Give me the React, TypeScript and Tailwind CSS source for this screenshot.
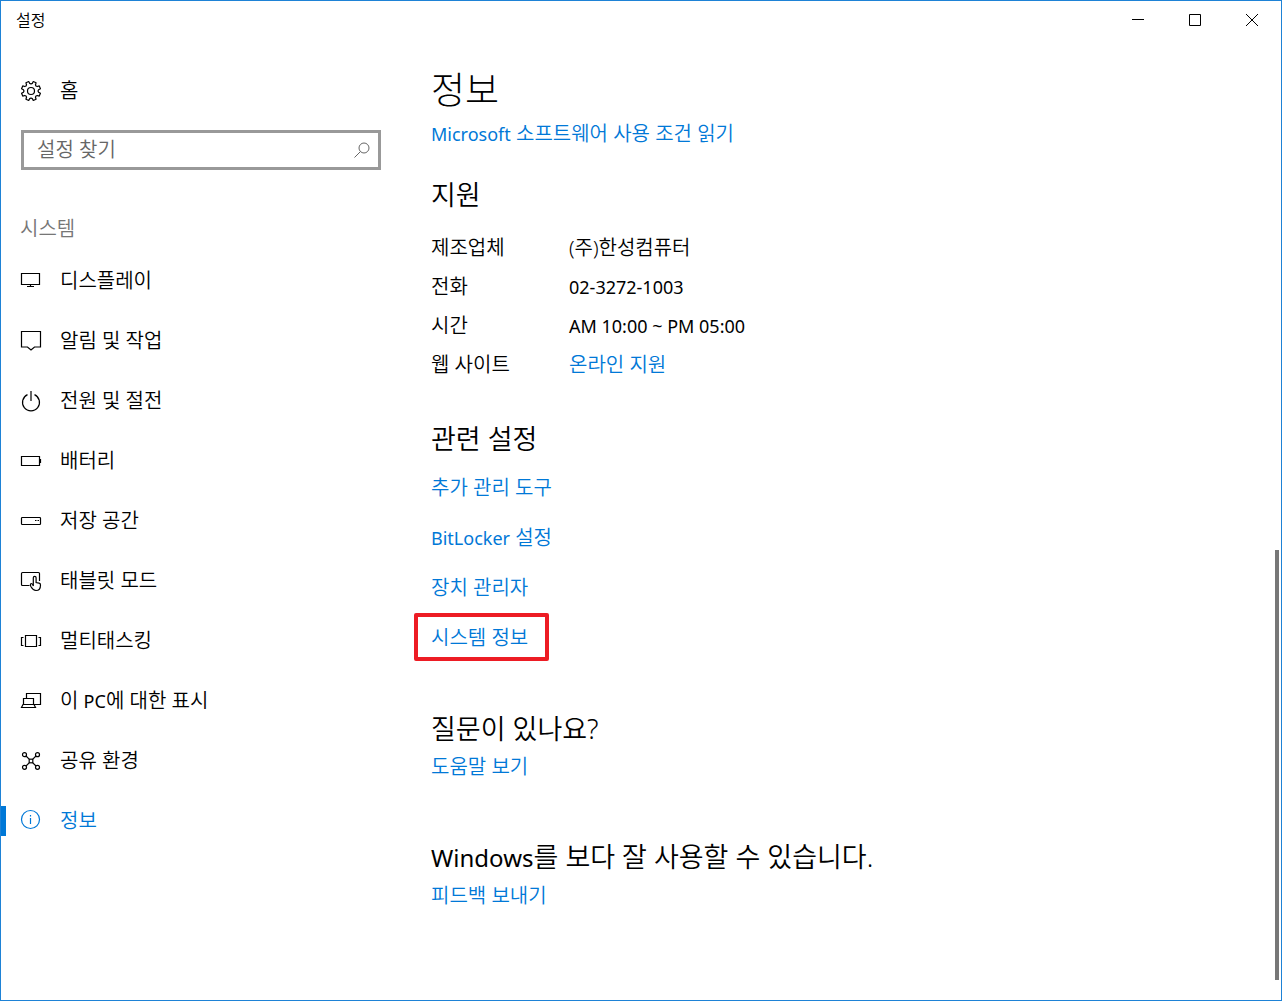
import type { ReactNode } from "react";

const gearPath = (() => {
  const points: string[] = [];
  for (let i = 0; i < 8; i++) {
    const center = 22.5 + i * 45;
    const corners: [number, number][] = [
      [-13, 7.7],
      [-9, 9.7],
      [9, 9.7],
      [13, 7.7],
      [22.5, 7],
    ];
    for (const [offset, radius] of corners) {
      const a = ((center + offset) * Math.PI) / 180;
      points.push(`${(12 + radius * Math.sin(a)).toFixed(2)} ${(12 - radius * Math.cos(a)).toFixed(2)}`);
    }
  }
  return `M${points.join("L")}Z`;
})();

function Icon({ children }: { children: ReactNode }) {
  return (
    <svg viewBox="0 0 24 24" className="size-6 shrink-0" fill="none" stroke="currentColor" strokeWidth="1.2" aria-hidden="true">
      {children}
    </svg>
  );
}

const navItems: { label: ReactNode; icon: ReactNode; active?: boolean }[] = [
  {
    label: "디스플레이",
    icon: <path d="M2.5 4.5h18v11h-18zM11.5 15.5v2M8 17.5h7" />,
  },
  {
    label: "알림 및 작업",
    icon: <path d="M2.5 2.5h19v15.500h-6L12 21l-3.500-3h-6z" />,
  },
  {
    label: "전원 및 절전",
    icon: <path d="M12 2v10M8.500 5.600a8.500 8.500 0 1 0 7 0" />,
  },
  {
    label: "배터리",
    icon: (
      <>
        <path d="M2.500 7.500h18v9h-18z" />
        <path d="M21.500 10v4" />
      </>
    ),
  },
  {
    label: "저장 공간",
    icon: (
      <>
        <rect x="2.500" y="8.500" width="19" height="7" rx="0.800" />
        <path d="M16 11.500h1.500M18.500 11.500h1.500" />
      </>
    ),
  },
  {
    label: "태블릿 모드",
    icon: (
      <path d="M10.500 16.500h-7a1 1 0 0 1-1-1v-11a1 1 0 0 1 1-1h16a1 1 0 0 1 1 1v7.500M14.300 17V8.800a1.400 1.400 0 0 1 2.800 0v4.700l3 .6a1.800 1.800 0 0 1 1.400 1.800c0 3.400-1.500 5.600-4.500 5.600-2.500 0-3.600-1.200-5-3.700-.8-1.600-.8-3.100.3-3.300 1-.1 1.400.9 2 2.500z" />
    ),
  },
  {
    label: "멀티태스킹",
    icon: <path d="M6.500 6.500h11v11h-11zM4.500 8.500h-2v8h2M19.500 8.500h2v8h-2" />,
  },
  {
    label: (
      <>
        이 <Latin>PC</Latin>에 대한 표시
      </>
    ),
    icon: (
      <path d="M7.500 9.500v-5h14v11h-6M4.500 15.500v-6h10v6M4 15.500h11l1.500 3h-14z" />
    ),
  },
  {
    label: "공유 환경",
    icon: (
      <>
        <circle cx="5.500" cy="5.700" r="2" />
        <circle cx="18.500" cy="5.700" r="2" />
        <circle cx="5.500" cy="18.300" r="2" />
        <circle cx="18.500" cy="18.300" r="2" />
        <rect x="10.200" y="10.200" width="3.600" height="3.600" />
        <path d="M7 7l3.200 3.200M17 7l-3.200 3.200M7 17l3.200-3.200M17 17l-3.200-3.200" />
      </>
    ),
  },
  {
    label: "정보",
    active: true,
    icon: (
      <>
        <circle cx="11.500" cy="10.500" r="9" />
        <path d="M11.500 9v6M11.500 6v1.500" />
      </>
    ),
  },
];

const supportRows: { label: string; value: ReactNode }[] = [
  { label: "제조업체", value: "(주)한성컴퓨터" },
  { label: "전화", value: <Latin>02-3272-1003</Latin> },
  { label: "시간", value: <Latin>AM 10:00 ~ PM 05:00</Latin> },
  { label: "웹 사이트", value: <TextLink>온라인 지원</TextLink> },
];

function Latin({ children }: { children: ReactNode }) {
  return <span className="text-[18px] font-normal">{children}</span>;
}

function TextLink({ children }: { children: ReactNode }) {
  return (
    <a href="#" className="text-[#0078d7] hover:text-gray-500">
      {children}
    </a>
  );
}

function Heading({ children }: { children: ReactNode }) {
  return <h2 className="text-[27px] leading-9 text-black">{children}</h2>;
}

function TitleBar() {
  return (
    <header className="flex h-10 items-start justify-between">
      <span className="pl-[15px] text-base leading-[38px]">설정</span>
      <div className="flex pr-px">
        <button type="button" aria-label="최소화" className="flex h-[38px] w-[57px] items-center justify-center">
          <svg viewBox="0 0 12 12" className="size-3" stroke="currentColor" fill="none" aria-hidden="true">
            <path d="M0 5.500h12" />
          </svg>
        </button>
        <button type="button" aria-label="최대화" className="flex h-[38px] w-[57px] items-center justify-center">
          <svg viewBox="0 0 12 12" className="size-3" stroke="currentColor" fill="none" aria-hidden="true">
            <path d="M.5.500h11v11h-11z" />
          </svg>
        </button>
        <button type="button" aria-label="닫기" className="flex h-[38px] w-[57px] items-center justify-center">
          <svg viewBox="0 0 12 12" className="size-3" stroke="currentColor" fill="none" aria-hidden="true">
            <path d="M0 0l12 12M12 0L0 12" />
          </svg>
        </button>
      </div>
    </header>
  );
}

function Sidebar() {
  return (
    <aside className="w-[400px] shrink-0">
      <a href="#" className="mt-5 flex h-[60px] items-center gap-[17px] pl-[18px]">
        <Icon>
          <path d={gearPath} strokeLinejoin="round" />
          <circle cx="12" cy="12" r="3.500" />
        </Icon>
        <span>홈</span>
      </a>
      <label className="mt-[9px] mr-5 ml-5 flex h-10 items-center border-[3px] border-[#999999] pr-2 pl-[13px]">
        <input
          type="search"
          aria-label="설정 찾기"
          placeholder="설정 찾기"
          className="min-w-0 flex-1 bg-transparent leading-7 outline-none placeholder:text-[#666666]"
        />
        <svg viewBox="0 0 16 16" className="size-4" fill="none" stroke="#666666" aria-hidden="true">
          <circle cx="10" cy="6" r="5" />
          <path d="M6.500 9.500L.5 15.500" />
        </svg>
      </label>
      <h2 className="mt-[45px] pl-[19px] leading-7 text-[#767676]">시스템</h2>
      <nav className="mt-2">
        {navItems.map((item, index) => (
          <a
            key={index}
            href="#"
            aria-current={item.active ? "page" : undefined}
            className={
              item.active
                ? "flex h-[60px] items-center text-[#0078d7]"
                : "flex h-[60px] items-center"
            }
          >
            <span className={item.active ? "h-[30px] w-[5px] bg-[#0078d7]" : "w-[5px]"} />
            <span className="flex items-center gap-[17px] pl-[13px]">
              <Icon>{item.icon}</Icon>
              <span>{item.label}</span>
            </span>
          </a>
        ))}
      </nav>
    </aside>
  );
}

export default function App() {
  return (
    <div className="flex min-h-screen flex-col border border-[#1e82d6] bg-white font-['Noto_Sans','Noto_Sans_CJK_KR',sans-serif] text-xl font-[350] text-black">
      <TitleBar />
      <div className="flex flex-1">
        <Sidebar />
        <main className="min-w-0 flex-1 pl-[30px]">
          <h1 className="mt-[25px] text-[37px] leading-[48px] font-light">정보</h1>
          <p className="mt-1 leading-8">
            <TextLink>
              <Latin>Microsoft</Latin> 소프트웨어 사용 조건 읽기
            </TextLink>
          </p>

          <section className="mt-[27px]">
            <Heading>지원</Heading>
            <table className="mt-[15px]">
              <tbody>
                {supportRows.map((row) => (
                  <tr key={row.label} className="h-[39px]">
                    <th scope="row" className="w-[138px] p-0 text-left font-[350]">
                      {row.label}
                    </th>
                    <td className="p-0">{row.value}</td>
                  </tr>
                ))}
              </tbody>
            </table>
          </section>

          <section className="mt-[37px]">
            <Heading>관련 설정</Heading>
            <ul className="mt-[6px]">
              <li className="flex h-[50px] items-center">
                <TextLink>추가 관리 도구</TextLink>
              </li>
              <li className="flex h-[50px] items-center">
                <TextLink>
                  <Latin>BitLocker</Latin> 설정
                </TextLink>
              </li>
              <li className="flex h-[50px] items-center">
                <TextLink>장치 관리자</TextLink>
              </li>
              <li className="flex h-[50px] items-center">
                <span className="relative">
                  <TextLink>시스템 정보</TextLink>
                  <span className="pointer-events-none absolute -top-[11px] -right-[21px] -bottom-[9px] -left-[17px] rounded-xs border-4 border-[#ed1c24]" />
                </span>
              </li>
            </ul>
          </section>

          <section className="mt-12">
            <Heading>질문이 있나요?</Heading>
            <p className="mt-1 leading-8">
              <TextLink>도움말 보기</TextLink>
            </p>
          </section>

          <section className="mt-14">
            <Heading>
              <span className="text-2xl font-normal">Windows</span>를 보다 잘 사용할 수 있습니다.
            </Heading>
            <p className="mt-[5px] leading-8">
              <TextLink>피드백 보내기</TextLink>
            </p>
          </section>
        </main>
        <div className="flex w-4 flex-col items-end justify-end pr-0.5" aria-hidden="true">
          <div className="mb-5 h-[430px] w-1 bg-[#777777]" />
        </div>
      </div>
    </div>
  );
}
